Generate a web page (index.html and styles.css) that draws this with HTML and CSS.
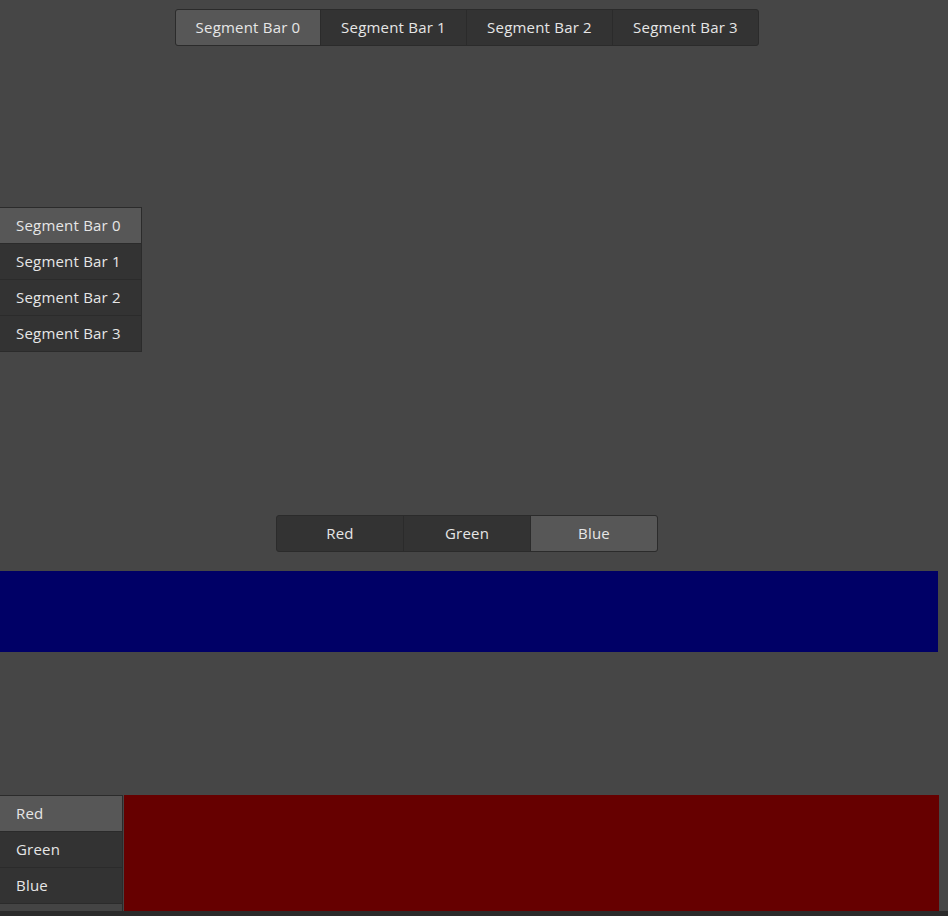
FILE: index.html
```html
<!DOCTYPE html>
<html>
<head>
<meta charset="utf-8">
<link rel="stylesheet" href="styles.css">
</head>
<body>
<div class="page">
  <div class="hbar top">
    <div class="seg sel">Segment Bar 0</div>
    <div class="seg">Segment Bar 1</div>
    <div class="seg">Segment Bar 2</div>
    <div class="seg">Segment Bar 3</div>
  </div>
  <div class="vbar side">
    <div class="vseg sel">Segment Bar 0</div>
    <div class="vseg">Segment Bar 1</div>
    <div class="vseg">Segment Bar 2</div>
    <div class="vseg">Segment Bar 3</div>
  </div>
  <div class="hbar rgb">
    <div class="seg">Red</div>
    <div class="seg">Green</div>
    <div class="seg sel">Blue</div>
  </div>
  <div class="bluebox"></div>
  <div class="bottom">
    <div class="vbar color">
      <div class="vseg sel">Red</div>
      <div class="vseg">Green</div>
      <div class="vseg">Blue</div>
      <div class="vfill"></div>
    </div>
    <div class="redbox"></div>
  </div>
  <div class="footer"></div>
</div>
</body>
</html>
```
FILE: styles.css
```css
html, body {
  margin: 0;
  padding: 0;
  background: #464646;
  height: 100%;
  overflow: hidden;
}
.page {
  display: flex;
  flex-direction: column;
  font-family: "Open Sans", "Noto Sans", sans-serif;
  font-size: 15px;
  letter-spacing: 0.2px;
  color: #e6e6e6;
  height: 916px;
}
.hbar {
  display: flex;
  background: #2b2b2b;
  border: 1px solid #2b2b2b;
  border-radius: 3px;
  gap: 1px;
  align-self: flex-start;
  height: 35px;
}
.hbar .seg {
  display: flex;
  align-items: center;
  justify-content: center;
  padding-bottom: 2px;
  box-sizing: border-box;
  background: #333333;
}
.hbar .seg:first-child { border-radius: 2px 0 0 2px; }
.hbar .seg:last-child { border-radius: 0 2px 2px 0; }
.seg.sel, .vseg.sel { background: #575757; }
.top {
  margin-top: 9px;
  margin-left: 175px;
}
.top .seg { width: 145px; }
.top .seg:first-child { width: 144px; }
.vbar {
  display: flex;
  flex-direction: column;
  background: #2b2b2b;
  gap: 1px;
  border: 1px solid #2b2b2b;
  border-left: none;
}
.vseg {
  display: flex;
  align-items: center;
  padding-left: 16px;
  padding-bottom: 1px;
  box-sizing: border-box;
  height: 35px;
  background: #333333;
}
.side {
  margin-top: 161px;
  width: 141px;
  align-self: flex-start;
}
.rgb {
  margin-top: 163px;
  margin-left: 276px;
}
.rgb .seg { width: 126px; }
.bluebox {
  margin-top: 19px;
  width: 938px;
  height: 81px;
  background: #000066;
}
.bottom {
  margin-top: 143px;
  display: flex;
  height: 116px;
}
.color {
  width: 122px;
  border-bottom: none;
  flex: none;
}
.color .vseg { flex: none; }
.vfill {
  flex: 1;
  background: #444444;
}
.redbox {
  margin-left: 1px;
  width: 815px;
  background: #660000;
}
.footer {
  flex: 1;
  background: #2b2b2b;
}
```
